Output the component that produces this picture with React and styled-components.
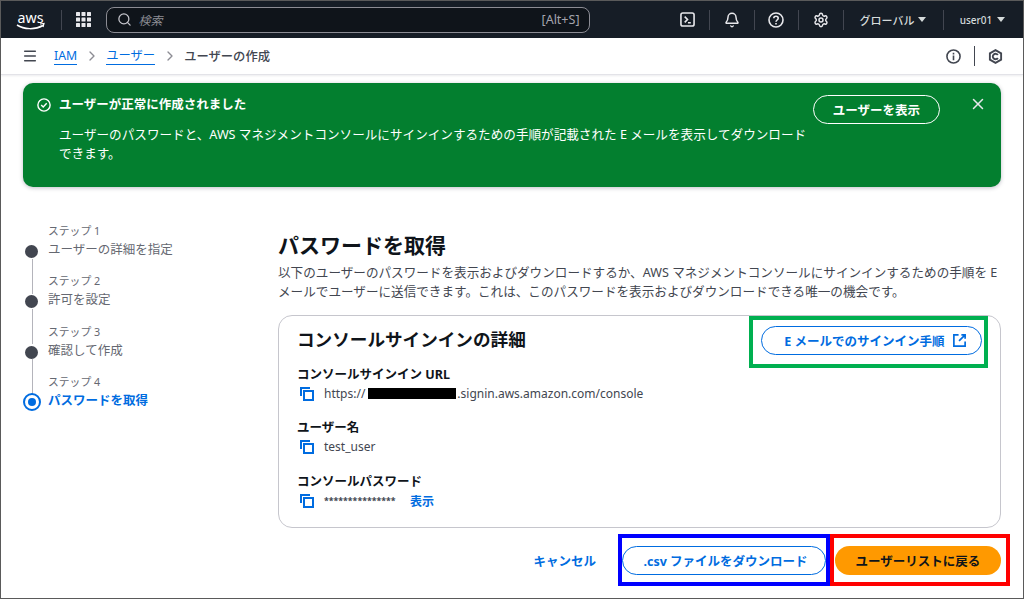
import React from 'react';
import styled, { createGlobalStyle } from 'styled-components';
import { Menu, ChevronRight, Search, Bell, Settings, X } from 'lucide-react';

const GlobalStyle = createGlobalStyle`
  html, body { margin: 0; padding: 0; background: #fff; }
  body {
    font-family: "Noto Sans", "Noto Sans CJK JP", sans-serif;
    color: #0f141a;
  }
  * { box-sizing: border-box; }
`;

const Page = styled.div`
  width: 1024px;
  height: 599px;
  overflow: hidden;
  border: 1px solid #5a5a5a;
  background: #fff;
`;

const TopBar = styled.header`
  height: 37px;
  background: #161d26;
  display: flex;
  align-items: center;
  padding-left: 15px;
  color: #c6c6cd;
`;

const Logo = styled.svg`
  width: 30px;
  height: 24px;
  flex: none;
`;

const BarDivider = styled.div`
  width: 1px;
  height: 20px;
  background: #424650;
  flex: none;
  margin: ${p => p.$margin || '0'};
`;

const SearchBox = styled.div`
  width: 484px;
  height: 26px;
  border: 1px solid #8c8c94;
  border-radius: 8px;
  background: #0f141a;
  display: flex;
  align-items: center;
  padding: 0 9px 0 10px;
  gap: 7px;
  font-size: 12px;
`;

const SearchHint = styled.span`
  font-style: italic;
  color: #8c8c94;
  flex: 1;
`;

const Shortcut = styled.span`
  color: #a4a4ad;
  font-size: 12.5px;
`;

const IconSlot = styled.div`
  width: 43.5px;
  margin-left: ${p => p.$lead || 0}px;
  display: flex;
  justify-content: center;
  align-items: center;
  flex: none;
`;

const BarMenu = styled.div`
  display: flex;
  align-items: center;
  justify-content: center;
  gap: ${p => p.$gap}px;
  font-size: ${p => p.$size}px;
  font-weight: 500;
  width: ${p => p.$w}px;
  flex: none;
  color: #d5dbdb;
`;

const Caret = styled.span`
  width: 0;
  height: 0;
  border-left: 4px solid transparent;
  border-right: 4px solid transparent;
  border-top: 5px solid #d5dbdb;
`;

const SubBar = styled.nav`
  height: 37px;
  display: flex;
  align-items: center;
  padding: 0 20px 0 21px;
  border-bottom: 1px solid #e3e3e8;
  box-shadow: 0 1px 2px rgba(0, 0, 40, 0.08);
  font-size: 12.3px;
  color: #424650;
`;

const Crumbs = styled.div`
  display: flex;
  align-items: center;
  margin-left: 16px;
  flex: 1;
  font-weight: 500;
`;

const Crumb = styled.a`
  color: #006ce0;
  border-bottom: 1px solid #006ce0;
  line-height: 17px;
  font-weight: 400;
`;

const CrumbSep = styled.span`
  display: flex;
  margin: 0 6.5px;
  color: #8c8c94;
`;

const Content = styled.main`
  padding: 8px 22px 0 22px;
`;

const Banner = styled.section`
  height: 104px;
  border-radius: 10px;
  background: #037f2f;
  color: #fff;
  display: flex;
  padding: 12px 14px 0 14px;
  box-shadow: 0 1px 4px rgba(0, 0, 40, 0.25);
`;

const BannerBody = styled.div`
  flex: 1;
`;

const BannerTitle = styled.div`
  display: flex;
  align-items: center;
  gap: 8px;
  font-size: 12.5px;
  font-weight: 700;
  line-height: 20px;
`;

const BannerText = styled.p`
  margin: 10px 0 0 22px;
  width: 750px;
  font-size: 12.6px;
  line-height: 19px;
`;

const BannerButton = styled.button`
  width: 127px;
  height: 29px;
  margin: 0 29px 0 0;
  border: 1.5px solid #fff;
  border-radius: 15px;
  background: transparent;
  color: #fff;
  font: 700 12.5px "Noto Sans", "Noto Sans CJK JP", sans-serif;
  flex: none;
`;

const BannerClose = styled.div`
  display: flex;
  height: 20px;
  flex: none;
`;

const Columns = styled.div`
  display: flex;
  margin-top: 35px;
`;

const Steps = styled.ol`
  list-style: none;
  margin: 0;
  padding: 0;
  width: 255px;
  flex: none;
`;

const Step = styled.li`
  position: relative;
  height: 50.3px;
  padding-left: 25px;
  &:not(:last-child)::after {
    content: '';
    position: absolute;
    left: 8.5px;
    top: 36.5px;
    width: 1.5px;
    height: 35px;
    background: #b4b4bb;
  }
`;

const StepNo = styled.div`
  font-size: 10.8px;
  line-height: 18px;
  color: #656871;
`;

const StepName = styled.div`
  font-size: 12.5px;
  line-height: 20px;
  color: ${p => (p.$active ? '#006ce0' : '#656871')};
  font-weight: ${p => (p.$active ? 700 : 400)};
`;

const Dot = styled.span`
  position: absolute;
  left: 2px;
  top: 23px;
  width: 13px;
  height: 13px;
  border-radius: 50%;
  background: #424650;
`;

const ActiveDot = styled.span`
  position: absolute;
  left: 0;
  top: 20.5px;
  width: 18px;
  height: 18px;
  border-radius: 50%;
  border: 2px solid #006ce0;
  background: #fff;
  display: flex;
  align-items: center;
  justify-content: center;
  &::after {
    content: '';
    width: 8px;
    height: 8px;
    border-radius: 50%;
    background: #006ce0;
  }
`;

const Main = styled.div`
  width: 723px;
  flex: none;
`;

const Title = styled.h1`
  margin: 9px 0 0 0;
  font-size: 21px;
  line-height: 28px;
  font-weight: 700;
`;

const Lead = styled.p`
  margin: 4px 0 0 0;
  font-size: 12.6px;
  line-height: 19px;
  color: #424650;
`;

const Card = styled.section`
  position: relative;
  margin-top: 14px;
  height: 213px;
  border: 1px solid #c6c6cd;
  border-radius: 14px;
  padding: 8px 18px;
`;

const CardTitle = styled.h2`
  margin: 0;
  font-size: 17.6px;
  line-height: 30px;
  font-weight: 700;
`;

const Field = styled.div`
  margin-top: ${p => p.$top || 0}px;
`;

const FieldLabel = styled.div`
  font-size: 12.5px;
  line-height: 18px;
  font-weight: 700;
  color: #0f141a;
`;

const FieldValue = styled.div`
  display: flex;
  align-items: center;
  height: 19px;
  font-size: 12px;
  color: #424650;
`;

const Copy = styled.svg`
  width: 16px;
  height: 16px;
  margin: 0 9px 0 2px;
  flex: none;
`;

const Redacted = styled.span`
  display: inline-block;
  width: 88px;
  height: 11px;
  margin: 0 1px 0 3px;
  background: #000;
`;

const Masked = styled.span`
  font-size: 8.8px;
  font-weight: 700;
  width: 86px;
`;

const Reveal = styled.a`
  color: #006ce0;
  font-weight: 700;
  font-size: 12px;
`;

const PillButton = styled.button`
  height: 29px;
  border-radius: 15px;
  border: ${p => (p.$primary ? 'none' : '1.5px solid #006ce0')};
  background: ${p => (p.$primary ? '#ff9900' : '#fff')};
  color: ${p => (p.$primary ? '#0f141a' : '#006ce0')};
  font: 700 12.5px "Noto Sans", "Noto Sans CJK JP", sans-serif;
  width: ${p => p.$w}px;
  display: flex;
  align-items: center;
  justify-content: center;
  gap: 7px;
  padding: 0 0 0 ${p => p.$shift || 0}px;
`;

// coloured boxes the screenshot's author drew around the buttons
const Note = styled.div`
  width: ${p => p.$w}px;
  height: 52px;
  border: 4px solid ${p => p.$color};
  display: flex;
  align-items: center;
  justify-content: flex-end;
  padding-right: ${p => p.$inset}px;
  flex: none;
`;

const CardNote = styled(Note)`
  position: absolute;
  top: 0;
  right: 12px;
  padding-bottom: 3px;
`;

const Actions = styled.div`
  display: flex;
  align-items: center;
  justify-content: flex-end;
  margin: 6px -9px 0 0;
`;

const Cancel = styled.a`
  color: #006ce0;
  font-size: 12.5px;
  font-weight: 700;
  margin-right: 22px;
`;

const CopyIcon = () => (
  <Copy viewBox="0 0 16 16" fill="none" stroke="#006ce0" strokeWidth="2">
    <path d="M2 10V2h9" />
    <rect x="5" y="5" width="9" height="9" />
  </Copy>
);

const steps = ['ユーザーの詳細を指定', '許可を設定', '確認して作成', 'パスワードを取得'];

const App = () => (
  <Page>
    <GlobalStyle />
    <TopBar>
      <Logo viewBox="0 0 30 24" fill="none">
        <text x="1.500" y="14.500" fill="#fff" fontSize="15" textLength="26" lengthAdjust="spacingAndGlyphs" fontFamily="Noto Sans, sans-serif">aws</text>
        <path d="M1 17c7 4.500 18 5 26 .5" stroke="#fff" strokeWidth="1.500" />
        <path d="M24 16l4-.5-1 3.500" stroke="#fff" strokeWidth="1.200" />
      </Logo>
      <BarDivider $margin="0 0 0 15px" />
      <IconSlot>
        <svg width="15" height="15" viewBox="0 0 15 15" fill="#e8e8ec">
          {[0, 5.500, 11].flatMap(y => [0, 5.500, 11].map(x => <rect key={`${x}-${y}`} x={x} y={y} width="4" height="4" rx="0.500" />))}
        </svg>
      </IconSlot>
      <SearchBox>
        <Search size={15} color="#c6c6cd" strokeWidth={2} />
        <SearchHint>検索</SearchHint>
        <Shortcut>[Alt+S]</Shortcut>
      </SearchBox>
      <IconSlot $lead={76}>
        <svg width="15" height="15" viewBox="0 0 16 16" fill="none" stroke="#e8e8ec" strokeWidth="1.700">
          <rect x="1" y="1" width="14" height="14" rx="2" />
          <path d="M5 5l3 3-3 3M8.500 11.500h3" />
        </svg>
      </IconSlot>
      <BarDivider />
      <IconSlot><Bell size={16} color="#e8e8ec" strokeWidth={2.2} /></IconSlot>
      <BarDivider />
      <IconSlot>
        <svg width="16" height="16" viewBox="0 0 16 16" fill="none" stroke="#e8e8ec" strokeWidth="1.600">
          <circle cx="8" cy="8" r="7" />
          <path d="M5.800 6.200C5.800 3.600 10.200 3.600 10.200 6.200c0 1.800-2.200 1.800-2.200 3.600M8 11v1.600" />
        </svg>
      </IconSlot>
      <BarDivider />
      <IconSlot><Settings size={16} color="#e8e8ec" strokeWidth={2.2} /></IconSlot>
      <BarDivider />
      <BarMenu $w={99} $size={11} $gap={4}>グローバル <Caret /></BarMenu>
      <BarDivider />
      <BarMenu $w={78} $size={10} $gap={5}>user01 <Caret /></BarMenu>
    </TopBar>
    <SubBar>
      <Menu size={16} color="#424650" strokeWidth={2.2} />
      <Crumbs>
        <Crumb>IAM</Crumb>
        <CrumbSep><ChevronRight size={16} /></CrumbSep>
        <Crumb>ユーザー</Crumb>
        <CrumbSep><ChevronRight size={16} /></CrumbSep>
        <span>ユーザーの作成</span>
      </Crumbs>
      <svg width="15" height="15" viewBox="0 0 16 16" fill="none" stroke="#424650" strokeWidth="1.700">
        <circle cx="8" cy="8" r="7" />
        <path d="M8 7v5M8 4v1.800" />
      </svg>
      <BarDivider $margin="0 13px" />
      <svg width="15" height="15" viewBox="0 0 16 16" fill="none" stroke="#424650" strokeWidth="2">
        <path d="M8 1.200l6 3.400v6.800l-6 3.400-6-3.400V4.600z" />
        <path d="M10.500 6.500A2.900 2.900 0 1 0 10.500 9.500" />
      </svg>
    </SubBar>
    <Content>
      <Banner>
        <BannerBody>
          <BannerTitle>
            <svg width="14" height="14" viewBox="0 0 16 16" fill="none" stroke="#fff" strokeWidth="1.600">
              <circle cx="8" cy="8" r="7" />
              <path d="M4.800 8l2.300 2.300 4-4.300" />
            </svg>
            ユーザーが正常に作成されました
          </BannerTitle>
          <BannerText>
            ユーザーのパスワードと、AWS マネジメントコンソールにサインインするための手順が記載された E メールを表示してダウンロードできます。
          </BannerText>
        </BannerBody>
        <BannerButton>ユーザーを表示</BannerButton>
        <BannerClose><X size={18} color="#e8e8ec" strokeWidth={2} /></BannerClose>
      </Banner>
      <Columns>
        <Steps>
          {steps.map((name, i) => (
            <Step key={name}>
              {i === 3 ? <ActiveDot /> : <Dot />}
              <StepNo>ステップ {i + 1}</StepNo>
              <StepName $active={i === 3}>{name}</StepName>
            </Step>
          ))}
        </Steps>
        <Main>
          <Title>パスワードを取得</Title>
          <Lead>
            以下のユーザーのパスワードを表示およびダウンロードするか、AWS マネジメントコンソールにサインインするための手順を E メールでユーザーに送信できます。これは、このパスワードを表示およびダウンロードできる唯一の機会です。
          </Lead>
          <Card>
            <CardTitle>コンソールサインインの詳細</CardTitle>
            <CardNote $color="#00b050" $w={239} $inset={2}>
              <PillButton $w={221} $shift={8}>E メールでのサインイン手順
                <svg width="15" height="15" viewBox="0 0 16 16" fill="none" stroke="#006ce0" strokeWidth="1.800">
                  <path d="M7 2H2v12h12V9M10 2h4v4M14 2L7.500 8.500" />
                </svg>
              </PillButton>
            </CardNote>
            <Field $top={12}>
              <FieldLabel>コンソールサインイン URL</FieldLabel>
              <FieldValue><CopyIcon />https://<Redacted />.signin.aws.amazon.com/console</FieldValue>
            </Field>
            <Field $top={16}>
              <FieldLabel>ユーザー名</FieldLabel>
              <FieldValue><CopyIcon />test_user</FieldValue>
            </Field>
            <Field $top={17}>
              <FieldLabel>コンソールパスワード</FieldLabel>
              <FieldValue><CopyIcon /><Masked>***************</Masked><Reveal>表示</Reveal></FieldValue>
            </Field>
          </Card>
          <Actions>
            <Cancel>キャンセル</Cancel>
            <Note $color="#0000ff" $w={212} $inset={0}>
              <PillButton $w={204} $shift={3}>.csv ファイルをダウンロード</PillButton>
            </Note>
            <Note $color="#ff0000" $w={180} $inset={5}>
              <PillButton $primary $w={166}>ユーザーリストに戻る</PillButton>
            </Note>
          </Actions>
        </Main>
      </Columns>
    </Content>
  </Page>
);

export default App;
